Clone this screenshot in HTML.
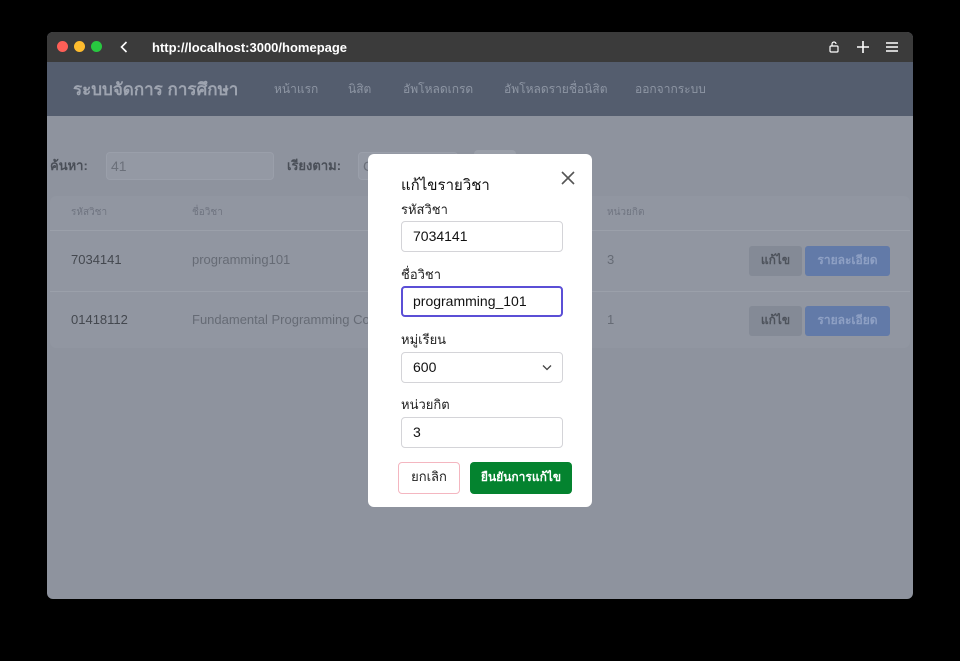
<!DOCTYPE html>
<html><head><meta charset="utf-8"><style>
*{box-sizing:border-box;margin:0;padding:0}
body{width:960px;height:661px;background:#000;font-family:"Liberation Sans","DejaVu Sans",sans-serif;position:relative;overflow:hidden}
.win{position:absolute;left:47px;top:32px;width:866px;height:567px;border-radius:6px;overflow:hidden;background:#8e939e}
.tb{position:absolute;left:0;top:0;width:866px;height:30px;background:#3b3b3b;color:#fff}
.dot{position:absolute;top:9px;width:11px;height:11px;border-radius:50%}
.nav{position:absolute;left:0;top:30px;width:866px;height:54px;background:#545d6e}
.a{position:absolute;white-space:nowrap}
.card{position:absolute;left:3px;top:164px;width:860px;height:152px;background:#9196a1;border-radius:6px}
.line{position:absolute;left:0;width:860px;height:1px;background:#9ba0aa}
.btn{position:absolute;height:30px;border-radius:3px;font-size:12px;font-weight:bold;text-align:center;line-height:28px}
.modal{position:absolute;left:368px;top:154px;width:224px;height:353px;background:#fff;border-radius:6px}
.lab{position:absolute;left:33px;font-size:13px;color:#222}
.inp{position:absolute;left:33px;width:162px;height:31px;border:1px solid #d4d4d8;border-radius:4px;font-size:14px;color:#111;padding-left:11px;line-height:29px}
</style></head><body>
<div class="win">
 <div class="tb">
  <div class="dot" style="left:10px;background:#fe5f57"></div>
  <div class="dot" style="left:27px;background:#febc2e"></div>
  <div class="dot" style="left:44px;background:#28c840"></div>
  <svg class="a" style="left:73px;top:9px" width="8" height="12" viewBox="0 0 8 12"><path d="M6.5 1L1.5 6L6.5 11" stroke="#fff" stroke-width="1.6" fill="none"/></svg>
  <div class="a" style="left:105px;top:8px;font-size:13px;font-weight:bold">http://localhost:3000/homepage</div>
  <svg class="a" style="left:782px;top:9px" width="10" height="12" viewBox="0 0 10 12"><rect x="1" y="5" width="8" height="6" rx="1" stroke="#fff" fill="none" stroke-width="1.2"/><path d="M3 5V3a2 2 0 0 1 4 0" stroke="#fff" fill="none" stroke-width="1.2"/></svg>
  <svg class="a" style="left:810px;top:9px" width="12" height="12" viewBox="0 0 12 12"><path d="M6 0V12M0 6H12" stroke="#fff" stroke-width="1.6"/></svg>
  <svg class="a" style="left:839px;top:10px" width="12" height="10" viewBox="0 0 12 10"><path d="M0 1H12M0 5H12M0 9H12" stroke="#fff" stroke-width="1.6"/></svg>
 </div>
 <div class="nav">
  <div class="a" style="left:26px;top:14px;font-size:17px;font-weight:bold;color:#9ea4b0">ระบบจัดการ การศึกษา</div>
  <div class="a" style="left:227px;top:18px;font-size:12px;color:#8e96a4">หน้าแรก</div>
  <div class="a" style="left:301px;top:18px;font-size:12px;color:#8e96a4">นิสิต</div>
  <div class="a" style="left:356px;top:18px;font-size:12px;color:#8e96a4">อัพโหลดเกรด</div>
  <div class="a" style="left:457px;top:18px;font-size:12px;color:#8e96a4">อัพโหลดรายชื่อนิสิต</div>
  <div class="a" style="left:588px;top:18px;font-size:12px;color:#8e96a4">ออกจากระบบ</div>
 </div>
 <div class="a" style="left:3px;top:123px;font-size:13px;font-weight:bold;color:#4a4f58">ค้นหา:</div>
 <div class="a" style="left:59px;top:120px;width:168px;height:28px;border:1px solid #9a9faa;border-radius:4px;background:#9499a4;font-size:14px;color:#6b707a;padding:5px 4px">41</div>
 <div class="a" style="left:240px;top:123px;font-size:13px;font-weight:bold;color:#4a4f58">เรียงตาม:</div>
 <div class="a" style="left:311px;top:120px;width:100px;height:28px;border:1px solid #9a9faa;border-radius:4px;background:#9499a4;font-size:14px;color:#6b707a;padding:5px 4px">C</div>
 <div class="a" style="left:427px;top:118px;width:42px;height:30px;border-radius:4px;background:#9a9fa9"></div>
 <div class="card">
  <div class="line" style="top:34px"></div>
  <div class="line" style="top:95px"></div>
  <div class="a" style="left:21px;top:9px;font-size:10px;color:#6f7480">รหัสวิชา</div>
  <div class="a" style="left:142px;top:9px;font-size:10px;color:#6f7480">ชื่อวิชา</div>
  <div class="a" style="left:557px;top:9px;font-size:10px;color:#6f7480">หน่วยกิต</div>
  <div class="a" style="left:21px;top:56px;font-size:13px;color:#44484f">7034141</div>
  <div class="a" style="left:142px;top:56px;font-size:13px;color:#666b75">programming101</div>
  <div class="a" style="left:557px;top:56px;font-size:13px;color:#666b75">3</div>
  <div class="a" style="left:21px;top:116px;font-size:13px;color:#44484f">01418112</div>
  <div class="a" style="left:142px;top:116px;font-size:13px;color:#666b75">Fundamental Programming Concepts</div>
  <div class="a" style="left:557px;top:116px;font-size:13px;color:#666b75">1</div>
  <div class="btn" style="left:699px;top:50px;width:53px;background:#848a96;color:#4e535c">แก้ไข</div>
  <div class="btn" style="left:755px;top:50px;width:85px;background:#627aa8;color:#8ea0c4">รายละเอียด</div>
  <div class="btn" style="left:699px;top:110px;width:53px;background:#848a96;color:#4e535c">แก้ไข</div>
  <div class="btn" style="left:755px;top:110px;width:85px;background:#627aa8;color:#8ea0c4">รายละเอียด</div>
 </div>
</div>
<div class="modal">
 <div class="a" style="left:33px;top:19px;font-size:15px;color:#111">แก้ไขรายวิชา</div>
 <svg class="a" style="left:192px;top:16px" width="16" height="16" viewBox="0 0 16 16"><path d="M2 2L14 14M14 2L2 14" stroke="#555" stroke-width="1.6" fill="none"/></svg>
 <div class="lab" style="top:45px">รหัสวิชา</div>
 <div class="inp" style="top:67px">7034141</div>
 <div class="lab" style="top:110px">ชื่อวิชา</div>
 <div class="inp" style="top:132px;border:2px solid #5b4fd6;padding-left:10px;line-height:27px">programming_101</div>
 <div class="lab" style="top:175px">หมู่เรียน</div>
 <div class="inp" style="top:198px">600<svg style="position:absolute;right:10px;top:11px" width="10" height="7" viewBox="0 0 10 7"><path d="M1 1.5L5 5.5L9 1.5" stroke="#444" stroke-width="1.3" fill="none"/></svg></div>
 <div class="lab" style="top:240px">หน่วยกิต</div>
 <div class="inp" style="top:263px">3</div>
 <div class="a" style="left:30px;top:308px;width:62px;height:32px;border:1px solid #f4b6c0;border-radius:4px;font-size:13px;color:#222;text-align:center;line-height:28px">ยกเลิก</div>
 <div class="a" style="left:102px;top:308px;width:102px;height:32px;background:#04832f;border-radius:4px;font-size:12px;font-weight:bold;color:#fff;text-align:center;line-height:30px">ยืนยันการแก้ไข</div>
</div>
</body></html>
